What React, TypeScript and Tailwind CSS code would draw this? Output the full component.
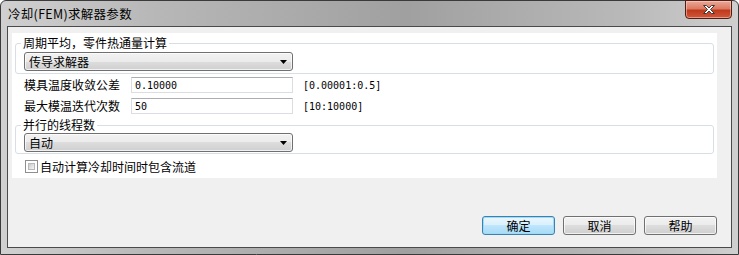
import React from "react";

const cjk = { fontFamily: '"Noto Sans CJK SC", "Noto Sans", sans-serif' };
const mono = { fontFamily: '"DejaVu Sans Mono", "Liberation Mono", monospace' };

function Combo({ text }: { text: string }) {
  return (
    <div className="flex h-[19px] w-[269px] items-center justify-between rounded-[3px] border border-[#707070] bg-[linear-gradient(to_bottom,#f2f2f2_0%,#ebebeb_50%,#dddddd_50%,#cfcfcf_100%)] pl-[4px] pr-[5px] text-[12px] leading-[17px] text-black shadow-[inset_0_0_0_1px_rgba(255,255,255,0.7)]">
      <span>{text}</span>
      <svg width="7" height="4" viewBox="0 0 7 4">
        <path d="M0 0H7L3.5 4Z" fill="#000" />
      </svg>
    </div>
  );
}

function Group({ label, children, pb }: { label: string; children: React.ReactNode; pb: string }) {
  return (
    <fieldset className={`ml-[3px] w-[699px] rounded-[3px] border border-[#d5dfe5] px-0 ${pb}`}>
      <legend className="ml-[5px] px-[2px] text-[12px] leading-[12px] text-black">{label}</legend>
      {children}
    </fieldset>
  );
}

function Row({ label, value, range, mt }: { label: string; value: string; range: string; mt: string }) {
  return (
    <div className={`flex items-center pl-[12px] ${mt}`}>
      <div className="w-[107px] text-[12px] leading-[16px] text-black">{label}</div>
      <div className="flex h-[16px] w-[162px] items-center border border-[#dadde2] border-t-[#abadb3] bg-white pl-[3px] text-[10px] text-black" style={mono}>
        {value}
      </div>
      <div className="ml-[10px] text-[10px] text-black" style={mono}>
        {range}
      </div>
    </div>
  );
}

function Button({ text, primary }: { text: string; primary?: boolean }) {
  return (
    <div
      className={
        primary
          ? "flex h-[19px] w-[73px] items-center justify-center rounded-[3px] border border-[#3c7fb1] bg-[linear-gradient(to_bottom,#eaf6fd_0%,#d9f0fc_50%,#bee6fd_50%,#a7d9f5_100%)] text-[12px] leading-[17px] text-black shadow-[inset_0_0_0_1px_#9cdcf7]"
          : "flex h-[19px] w-[73px] items-center justify-center rounded-[3px] border border-[#707070] bg-[linear-gradient(to_bottom,#f2f2f2_0%,#ebebeb_50%,#dddddd_50%,#cfcfcf_100%)] text-[12px] leading-[17px] text-black shadow-[inset_0_0_0_1px_rgba(255,255,255,0.7)]"
      }
    >
      {text}
    </div>
  );
}

export default function App() {
  return (
    <div
      className="flex h-[255px] w-[739px] flex-col rounded-t-[6px] border border-[#3a3a3a] bg-[linear-gradient(to_right,#d0d0d0_0%,#b8b8b8_20%,#a0a0a0_55%,#b9b9b9_85%,#cfcfcf_100%)] px-[6px] pb-[6px]"
      style={cjk}
    >
      {/* title bar */}
      <div className="relative flex h-[25px] shrink-0 items-center pl-[1px]">
        <span className="text-[12.5px] leading-[14px] tracking-[0.3px] text-black">冷却(FEM)求解器参数</span>
        <div className="absolute right-[0px] top-[-1px] flex h-[19px] w-[47px] items-center justify-center rounded-b-[4px] border border-[#4f1f15] bg-[linear-gradient(to_bottom,#e9a99a_0%,#dc7a62_45%,#c0391d_55%,#d0583a_100%)] shadow-[inset_0_0_0_1px_rgba(255,220,210,0.5)]">
          <svg width="14" height="11" viewBox="0 0 14 11">
            <path
              d="M1.5 1.5L4.5 1.5L7 4L9.5 1.5L12.5 1.5L8.5 5.5L12.5 9.5L9.5 9.5L7 7L4.5 9.5L1.5 9.5L5.5 5.5Z"
              fill="#ffffff"
              stroke="#3a3a3a"
              strokeWidth="1"
              strokeLinejoin="round"
            />
          </svg>
        </div>
      </div>
      {/* client area */}
      <div className="flex flex-1 flex-col border border-[#4a4a4a] bg-[#f0f0f0]">
        <div className="ml-[4px] mt-[6px] flex h-[145px] w-[705px] flex-col bg-white">
          <div className="mt-[4px]">
            <Group label="周期平均，零件热通量计算" pb="pb-[2px]">
              <div className="mt-[3px] pl-[8px]">
                <Combo text="传导求解器" />
              </div>
            </Group>
          </div>
          <Row label="模具温度收敛公差" value="0.10000" range="[0.00001:0.5]" mt="mt-[3px]" />
          <Row label="最大模温迭代次数" value="50" range="[10:10000]" mt="mt-[5px]" />
          <div className="mt-[5px]">
            <Group label="并行的线程数" pb="pb-[1px]">
              <div className="mt-[2px] pl-[8px]">
                <Combo text="自动" />
              </div>
            </Group>
          </div>
          <div className="ml-[13px] mt-[6px] flex items-center">
            <div className="h-[13px] w-[13px] border border-[#8f8f8f] bg-white p-[2px]">
              <div className="h-full w-full border border-[#b9b9b9] bg-[linear-gradient(135deg,#cbcbcb,#f6f6f6)]" />
            </div>
            <span className="ml-[2px] text-[12px] leading-[13px] text-black">自动计算冷却时间时包含流道</span>
          </div>
        </div>
        <div className="mt-[38px] flex justify-end gap-[8px] pr-[14px]">
          <Button text="确定" primary />
          <Button text="取消" />
          <Button text="帮助" />
        </div>
      </div>
    </div>
  );
}
